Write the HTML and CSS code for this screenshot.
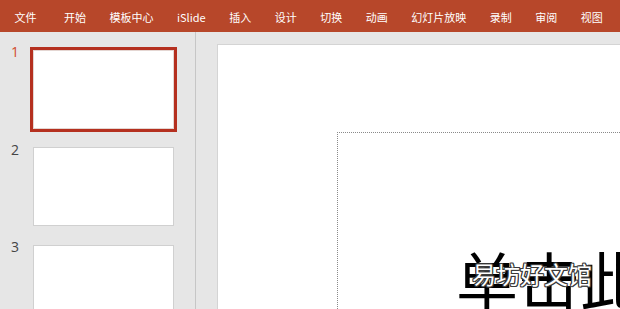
FILE: index.html
```html
<!DOCTYPE html>
<html lang="zh-CN">
<head>
<meta charset="utf-8">
<title>PowerPoint</title>
<link rel="stylesheet" href="styles.css">
</head>
<body>
<div class="app">
  <nav class="menubar">
    <span class="menu-item menu-file">文件</span>
    <span class="menu-item">开始</span>
    <span class="menu-item">模板中心</span>
    <span class="menu-item">iSlide</span>
    <span class="menu-item">插入</span>
    <span class="menu-item">设计</span>
    <span class="menu-item">切换</span>
    <span class="menu-item">动画</span>
    <span class="menu-item">幻灯片放映</span>
    <span class="menu-item">录制</span>
    <span class="menu-item">审阅</span>
    <span class="menu-item">视图</span>
  </nav>
  <div class="workspace">
    <aside class="thumbs">
      <div class="thumb-row">
        <span class="thumb-num active-num">1</span>
        <div class="thumb active"></div>
      </div>
      <div class="thumb-row">
        <span class="thumb-num">2</span>
        <div class="thumb"></div>
      </div>
      <div class="thumb-row">
        <span class="thumb-num">3</span>
        <div class="thumb"></div>
      </div>
    </aside>
    <main class="stage">
      <div class="slide">
        <div class="placeholder">
          <div class="title">单击此处添加标题</div>
        </div>
      </div>
    </main>
  </div>
  <div class="watermark">易坊好文馆</div>
</div>
</body>
</html>
```
FILE: styles.css
```css
html, body {
  margin: 0;
  padding: 0;
}
body {
  font-family: "Noto Sans CJK SC", "Noto Sans", sans-serif;
  background: #e6e6e6;
}
.app {
  position: relative;
  width: 620px;
  height: 309px;
  overflow: hidden;
  display: flex;
  flex-direction: column;
}
.menubar {
  flex: 0 0 32px;
  height: 32px;
  background: #b7472a;
  display: flex;
  align-items: center;
  padding-left: 14.5px;
  padding-top: 2px;
  box-sizing: border-box;
  gap: 23.5px;
  color: #ffffff;
  font-size: 11px;
  line-height: 1;
  white-space: nowrap;
}
.menu-file {
  margin-right: 4px;
}
.workspace {
  flex: 1;
  display: flex;
  min-height: 0;
  background: #e6e6e6;
}
.thumbs {
  flex: 0 0 195px;
  border-right: 1px solid #c6c6c6;
  display: flex;
  flex-direction: column;
  gap: 18.5px;
  padding-top: 17.5px;
}
.thumb-row {
  display: flex;
  align-items: flex-start;
  padding-left: 11px;
}
.thumb-num {
  width: 22px;
  font-family: "Open Sans", "Noto Sans", sans-serif;
  font-size: 14px;
  line-height: 14px;
  margin-top: -4.5px;
  color: #444444;
}
.thumb-num.active-num {
  color: #d14b2b;
}
.thumb {
  width: 141px;
  height: 79px;
  box-sizing: border-box;
  background: #ffffff;
  border: 1px solid #d0d0d0;
}
.thumb.active {
  border-color: #e4d6d2;
  box-shadow: 0 0 0 3px #b5301f;
}
.stage {
  flex: 1;
  display: flex;
  padding: 12px 0 0 21px;
  min-width: 0;
}
.slide {
  flex: 1;
  background: #ffffff;
  border-top: 1px solid #d4d4d4;
  border-left: 1px solid #d4d4d4;
  padding: 87px 0 0 119px;
  display: flex;
  min-width: 0;
}
.placeholder {
  flex: 1;
  border-top: 1px dotted #8a8a8a;
  border-left: 1px dotted #8a8a8a;
  padding: 114px 0 0 118px;
  overflow: hidden;
}
.title {
  font-size: 62px;
  line-height: 1;
  white-space: nowrap;
  color: #000000;
}
.watermark {
  position: absolute;
  left: 472px;
  top: 262px;
  font-size: 24px;
  line-height: 1;
  color: #ffffff;
  white-space: nowrap;
  text-shadow:
    1px 0 0 #3a3a3a, -1px 0 0 #3a3a3a, 0 1px 0 #3a3a3a, 0 -1px 0 #3a3a3a,
    1px 1px 0 #3a3a3a, -1px -1px 0 #3a3a3a, 1px -1px 0 #3a3a3a, -1px 1px 0 #3a3a3a;
}
```
